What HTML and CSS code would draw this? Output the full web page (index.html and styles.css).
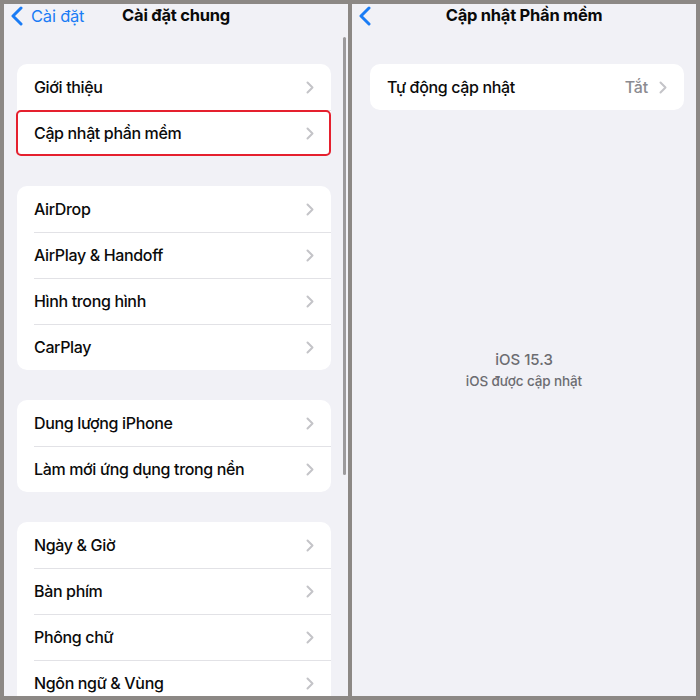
FILE: index.html
```html
<!DOCTYPE html>
<html lang="vi">
<head>
<meta charset="utf-8">
<title>Cài đặt</title>
<link rel="stylesheet" href="styles.css">
</head>
<body>
<div class="frame">
  <section class="panel left">
    <header class="nav">
      <a class="back">
        <svg class="back-ico" viewBox="0 0 12 20" width="12" height="20"><polyline points="10,2 2,10 10,18" fill="none" stroke="#1a7cf5" stroke-width="3" stroke-linecap="round" stroke-linejoin="round"/></svg>
        <span class="back-label">Cài đặt</span>
      </a>
      <h1 class="title">Cài đặt chung</h1>
    </header>
    <div class="scroll">
      <div class="group">
        <div class="row"><span class="label">Giới thiệu</span><svg class="chev" viewBox="0 0 8 13" width="8" height="13"><polyline points="1.5,1.5 6.5,6.5 1.5,11.5" fill="none" stroke="#c4c4c8" stroke-width="2" stroke-linecap="round" stroke-linejoin="round"/></svg></div>
        <div class="row marked"><span class="label">Cập nhật phần mềm</span><svg class="chev" viewBox="0 0 8 13" width="8" height="13"><polyline points="1.5,1.5 6.5,6.5 1.5,11.5" fill="none" stroke="#c4c4c8" stroke-width="2" stroke-linecap="round" stroke-linejoin="round"/></svg></div>
      </div>
      <div class="group">
        <div class="row"><span class="label">AirDrop</span><svg class="chev" viewBox="0 0 8 13" width="8" height="13"><polyline points="1.5,1.5 6.5,6.5 1.5,11.5" fill="none" stroke="#c4c4c8" stroke-width="2" stroke-linecap="round" stroke-linejoin="round"/></svg></div>
        <div class="row"><span class="label">AirPlay &amp; Handoff</span><svg class="chev" viewBox="0 0 8 13" width="8" height="13"><polyline points="1.5,1.5 6.5,6.5 1.5,11.5" fill="none" stroke="#c4c4c8" stroke-width="2" stroke-linecap="round" stroke-linejoin="round"/></svg></div>
        <div class="row"><span class="label">Hình trong hình</span><svg class="chev" viewBox="0 0 8 13" width="8" height="13"><polyline points="1.5,1.5 6.5,6.5 1.5,11.5" fill="none" stroke="#c4c4c8" stroke-width="2" stroke-linecap="round" stroke-linejoin="round"/></svg></div>
        <div class="row"><span class="label">CarPlay</span><svg class="chev" viewBox="0 0 8 13" width="8" height="13"><polyline points="1.5,1.5 6.5,6.5 1.5,11.5" fill="none" stroke="#c4c4c8" stroke-width="2" stroke-linecap="round" stroke-linejoin="round"/></svg></div>
      </div>
      <div class="group">
        <div class="row"><span class="label">Dung lượng iPhone</span><svg class="chev" viewBox="0 0 8 13" width="8" height="13"><polyline points="1.5,1.5 6.5,6.5 1.5,11.5" fill="none" stroke="#c4c4c8" stroke-width="2" stroke-linecap="round" stroke-linejoin="round"/></svg></div>
        <div class="row"><span class="label">Làm mới ứng dụng trong nền</span><svg class="chev" viewBox="0 0 8 13" width="8" height="13"><polyline points="1.5,1.5 6.5,6.5 1.5,11.5" fill="none" stroke="#c4c4c8" stroke-width="2" stroke-linecap="round" stroke-linejoin="round"/></svg></div>
      </div>
      <div class="group">
        <div class="row"><span class="label">Ngày &amp; Giờ</span><svg class="chev" viewBox="0 0 8 13" width="8" height="13"><polyline points="1.5,1.5 6.5,6.5 1.5,11.5" fill="none" stroke="#c4c4c8" stroke-width="2" stroke-linecap="round" stroke-linejoin="round"/></svg></div>
        <div class="row"><span class="label">Bàn phím</span><svg class="chev" viewBox="0 0 8 13" width="8" height="13"><polyline points="1.5,1.5 6.5,6.5 1.5,11.5" fill="none" stroke="#c4c4c8" stroke-width="2" stroke-linecap="round" stroke-linejoin="round"/></svg></div>
        <div class="row"><span class="label">Phông chữ</span><svg class="chev" viewBox="0 0 8 13" width="8" height="13"><polyline points="1.5,1.5 6.5,6.5 1.5,11.5" fill="none" stroke="#c4c4c8" stroke-width="2" stroke-linecap="round" stroke-linejoin="round"/></svg></div>
        <div class="row"><span class="label">Ngôn ngữ &amp; Vùng</span><svg class="chev" viewBox="0 0 8 13" width="8" height="13"><polyline points="1.5,1.5 6.5,6.5 1.5,11.5" fill="none" stroke="#c4c4c8" stroke-width="2" stroke-linecap="round" stroke-linejoin="round"/></svg></div>
      </div>
    </div>
    <div class="scrollbar"></div>
  </section>
  <section class="panel right">
    <header class="nav">
      <a class="back">
        <svg class="back-ico" viewBox="0 0 12 20" width="12" height="20"><polyline points="10,2 2,10 10,18" fill="none" stroke="#1a7cf5" stroke-width="3" stroke-linecap="round" stroke-linejoin="round"/></svg>
      </a>
      <h1 class="title">Cập nhật Phần mềm</h1>
    </header>
    <div class="scroll">
      <div class="group">
        <div class="row"><span class="label">Tự động cập nhật</span><span class="value">Tắt</span><svg class="chev" viewBox="0 0 8 13" width="8" height="13"><polyline points="1.5,1.5 6.5,6.5 1.5,11.5" fill="none" stroke="#c4c4c8" stroke-width="2" stroke-linecap="round" stroke-linejoin="round"/></svg></div>
      </div>
      <div class="status">
        <div class="version">iOS 15.3</div>
        <div class="note">iOS được cập nhật</div>
      </div>
    </div>
  </section>
</div>
</body>
</html>
```

FILE: styles.css
```css
* { box-sizing: border-box; }
html, body {
  margin: 0;
  padding: 0;
  width: 700px;
  height: 700px;
  overflow: hidden;
  background: #8c8885;
  font-family: "Inter", "Roboto", "Noto Sans", sans-serif;
  -webkit-font-smoothing: antialiased;
}
.frame {
  display: flex;
  gap: 4px;
  padding: 4px;
  height: 700px;
}
.panel {
  position: relative;
  width: 344px;
  height: 692px;
  background: #f1f1f6;
  overflow: hidden;
}
.nav {
  position: relative;
  height: 22px;
  display: flex;
  align-items: center;
  justify-content: center;
}
.back {
  position: absolute;
  left: 7px;
  top: 2px;
  display: flex;
  align-items: center;
  gap: 8px;
  color: #1a7cf5;
}
.back-label {
  font-size: 16.5px;
  letter-spacing: -0.2px;
}
.title {
  margin: 0;
  font-size: 16.5px;
  font-weight: 700;
  color: #0a0a0a;
  letter-spacing: -0.25px;
}
.scroll {
  padding-top: 38px;
  display: flex;
  flex-direction: column;
  gap: 30px;
}
.left .group { margin: 0 17px 0 13px; }
.right .group { margin: 0 12px 0 18px; }
.group {
  background: #fff;
  border-radius: 10px;
}
.row {
  position: relative;
  height: 46px;
  display: flex;
  align-items: center;
  padding: 0 17px;
}
.row + .row::before {
  content: "";
  position: absolute;
  left: 17px;
  right: 0;
  top: 0;
  height: 1px;
  background: #e2e2e6;
}
.label {
  flex: 1;
  font-size: 16px;
  font-weight: 500;
  color: #0b0b0b;
  letter-spacing: -0.35px;
}
.value {
  font-size: 16px;
  font-weight: 500;
  color: #8b8b90;
  margin-right: 11px;
  letter-spacing: -0.2px;
}
.chev { flex: none; }
.marked::after {
  content: "";
  position: absolute;
  left: -1px;
  right: 0;
  top: 0;
  bottom: 0;
  border: 2px solid #e5202e;
  border-radius: 5px;
}
.scrollbar {
  position: absolute;
  left: 339px;
  top: 33px;
  width: 2.5px;
  height: 438px;
  background: #9c9a9c;
  border-radius: 2px;
}
.status {
  margin-top: 209px;
  text-align: center;
  color: #6c6c71;
  font-weight: 500;
}
.version {
  font-size: 15px;
  line-height: 22px;
}
.note {
  font-size: 13.5px;
  line-height: 20px;
  letter-spacing: -0.1px;
}
```
